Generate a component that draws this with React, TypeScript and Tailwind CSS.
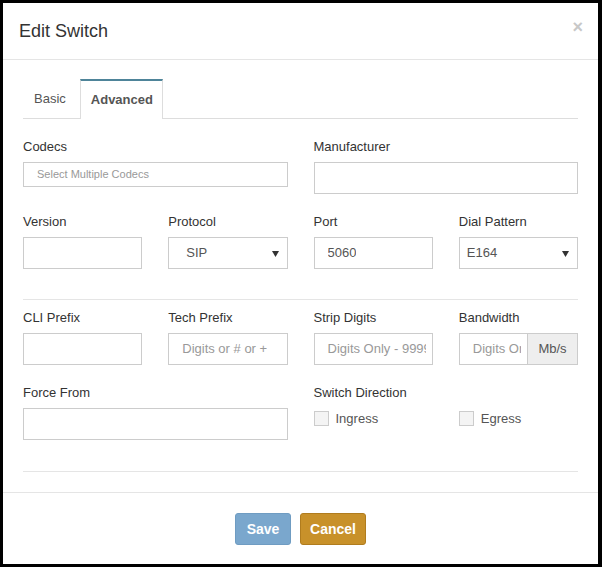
import React from 'react';

const font = { fontFamily: '"Liberation Sans", Arial, sans-serif' };

const Label = ({ children }: { children: React.ReactNode }) => (
  <div className="h-[20px] leading-[20px] text-[13px] text-[#333] mb-[5px]">{children}</div>
);

const TextBox = ({ value, placeholder }: { value?: string; placeholder?: string }) => (
  <div className="h-[32px] border border-[#ccc] bg-white flex items-center pl-[13px] pr-[6px] text-[13px]">
    <span className={`block overflow-hidden whitespace-nowrap ${value ? 'text-[#555]' : 'text-[#999]'}`}>
      {value ?? placeholder}
    </span>
  </div>
);

const SelectBox = ({ value, pad }: { value: string; pad: string }) => (
  <div className={`relative h-[32px] border border-[#ccc] bg-white flex items-center text-[13px] text-[#555] ${pad}`}>
    <span>{value}</span>
    <svg className="absolute right-[8px] top-[13px]" width="7" height="6" viewBox="0 0 7 6">
      <polygon points="0,0 7,0 3.5,6" fill="#333" />
    </svg>
  </div>
);

const Check = ({ label }: { label: string }) => (
  <div className="flex items-center gap-[7px]">
    <div className="w-[15px] h-[15px] border border-[#ccc] bg-[#f4f4f4]" />
    <span className="text-[13px] text-[#555]">{label}</span>
  </div>
);

export default function App() {
  return (
    <div className="w-[602px] h-[567px] bg-black pt-[3px] pl-[3px] pr-[4px] pb-[3px]" style={font}>
      <div className="bg-white h-full flex flex-col">
        {/* header */}
        <div className="h-[57px] border-b border-[#e5e5e5] flex items-center justify-between pl-[16px] pr-[15px]">
          <h4 className="text-[18px] text-[#333] leading-none">Edit Switch</h4>
          <span className="self-start mt-[15px] text-[18px] font-bold text-[#c8c8c8] leading-none">×</span>
        </div>

        {/* body */}
        <div className="px-[20px] pt-[19px] pb-[20px]">
          <div className="flex h-[40px] border-b border-[#ddd]">
            <div className="pl-[11px] pr-[14px] flex items-center text-[13px] text-[#555] pt-[1px]">Basic</div>
            <div className="pl-[10px] pr-[9px] flex items-center text-[13px] text-[#555] font-semibold bg-white border-t-2 border-t-[#4e8499] border-x border-x-[#ddd] mb-[-1px]">
              Advanced
            </div>
          </div>

          <div className="grid grid-cols-4 gap-x-[26px] gap-y-[18px] pt-[18px]">
            <div className="col-span-2">
              <Label>Codecs</Label>
              <div className="h-[25px] border border-[#ccc] flex items-center pl-[13px] text-[11px] text-[#999]">
                Select Multiple Codecs
              </div>
            </div>
            <div className="col-span-2">
              <Label>Manufacturer</Label>
              <TextBox />
            </div>

            <div>
              <Label>Version</Label>
              <TextBox />
            </div>
            <div>
              <Label>Protocol</Label>
              <SelectBox value="SIP" pad="pl-[17px]" />
            </div>
            <div>
              <Label>Port</Label>
              <TextBox value="5060" />
            </div>
            <div>
              <Label>Dial Pattern</Label>
              <SelectBox value="E164" pad="pl-[7px]" />
            </div>
          </div>

          <hr className="border-t border-[#e5e5e5] mt-[30px] mb-[8px]" />

          <div className="grid grid-cols-4 gap-x-[26px] gap-y-[18px]">
            <div>
              <Label>CLI Prefix</Label>
              <TextBox />
            </div>
            <div>
              <Label>Tech Prefix</Label>
              <TextBox placeholder="Digits or # or +" />
            </div>
            <div>
              <Label>Strip Digits</Label>
              <TextBox placeholder="Digits Only - 9999" />
            </div>
            <div>
              <Label>Bandwidth</Label>
              <div className="flex h-[32px]">
                <div className="flex-1 min-w-0 border border-[#ccc] flex items-center pl-[13px] pr-[6px] text-[13px] text-[#999]">
                  <span className="block overflow-hidden whitespace-nowrap">Digits Only</span>
                </div>
                <div className="w-[50px] border border-l-0 border-[#ccc] bg-[#eee] flex items-center justify-center text-[13px] text-[#555]">
                  Mb/s
                </div>
              </div>
            </div>

            <div className="col-span-2">
              <Label>Force From</Label>
              <TextBox />
            </div>
            <div className="col-span-2">
              <div className="h-[20px] leading-[20px] text-[13px] text-[#333] mb-[6px]">Switch Direction</div>
              <div className="grid grid-cols-2 gap-x-[26px]">
                <Check label="Ingress" />
                <Check label="Egress" />
              </div>
            </div>
          </div>

          <hr className="border-t border-[#e5e5e5] mt-[31px]" />
        </div>

        {/* footer */}
        <div className="border-t border-[#e5e5e5] flex justify-center gap-[9px] pt-[20px]">
          <button className="w-[56px] h-[32px] rounded-[3px] bg-[#7aa7cd] border border-[#6f9cc2] text-white text-[14px] font-bold">
            Save
          </button>
          <button className="w-[66px] h-[32px] rounded-[3px] bg-[#c8912a] border border-[#b07c1e] text-white text-[14px] font-bold">
            Cancel
          </button>
        </div>
      </div>
    </div>
  );
}
